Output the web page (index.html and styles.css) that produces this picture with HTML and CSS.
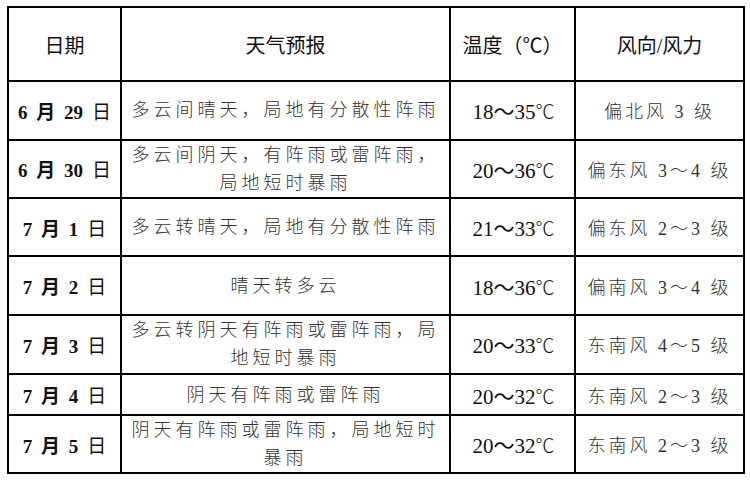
FILE: index.html
```html
<!DOCTYPE html>
<html lang="zh-CN">
<head>
<meta charset="utf-8">
<title>天气预报</title>
<link rel="stylesheet" href="styles.css">
</head>
<body>
<table class="forecast">
  <colgroup>
    <col class="c-date">
    <col class="c-desc">
    <col class="c-temp">
    <col class="c-wind">
  </colgroup>
  <thead>
    <tr class="r-head">
      <th>日期</th>
      <th>天气预报</th>
      <th>温度（℃）</th>
      <th>风向/风力</th>
    </tr>
  </thead>
  <tbody>
    <tr class="r-a">
      <td class="date">6 月 29 <span class="d">日</span></td>
      <td class="desc">多云间晴天，局地有分散性阵雨</td>
      <td class="temp">18～35<span class="deg">℃</span></td>
      <td class="wind">偏北风 3 级</td>
    </tr>
    <tr class="r-b">
      <td class="date">6 月 30 <span class="d">日</span></td>
      <td class="desc">多云间阴天，有阵雨或雷阵雨，局地短时暴雨</td>
      <td class="temp">20～36<span class="deg">℃</span></td>
      <td class="wind">偏东风 3～4 级</td>
    </tr>
    <tr class="r-a">
      <td class="date">7 月 1 <span class="d">日</span></td>
      <td class="desc">多云转晴天，局地有分散性阵雨</td>
      <td class="temp">21～33<span class="deg">℃</span></td>
      <td class="wind">偏东风 2～3 级</td>
    </tr>
    <tr class="r-a">
      <td class="date">7 月 2 <span class="d">日</span></td>
      <td class="desc">晴天转多云</td>
      <td class="temp">18～36<span class="deg">℃</span></td>
      <td class="wind">偏南风 3～4 级</td>
    </tr>
    <tr class="r-a">
      <td class="date">7 月 3 <span class="d">日</span></td>
      <td class="desc">多云转阴天有阵雨或雷阵雨，局地短时暴雨</td>
      <td class="temp">20～33<span class="deg">℃</span></td>
      <td class="wind">东南风 4～5 级</td>
    </tr>
    <tr class="r-c">
      <td class="date">7 月 4 <span class="d">日</span></td>
      <td class="desc">阴天有阵雨或雷阵雨</td>
      <td class="temp">20～32<span class="deg">℃</span></td>
      <td class="wind">东南风 2～3 级</td>
    </tr>
    <tr class="r-d">
      <td class="date">7 月 5 <span class="d">日</span></td>
      <td class="desc">阴天有阵雨或雷阵雨，局地短时暴雨</td>
      <td class="temp">20～32<span class="deg">℃</span></td>
      <td class="wind">东南风 2～3 级</td>
    </tr>
  </tbody>
</table>
</body>
</html>
```

FILE: styles.css
```css
html, body {
  margin: 0;
  padding: 0;
  background: #fff;
}

body {
  padding: 6px 0 0 7px;
  font-family: "Liberation Serif", "Noto Sans CJK SC", serif;
  color: #000;
}

.forecast {
  border-collapse: collapse;
  table-layout: fixed;
  width: 736px;
}

.c-date { width: 113px; }
.c-desc { width: 329px; }
.c-temp { width: 125px; }
.c-wind { width: 169px; }

.forecast th,
.forecast td {
  border: 2px solid #000;
  padding: 0 4px;
  text-align: center;
  vertical-align: middle;
}

.forecast th {
  font-weight: normal;
  font-size: 20px;
  color: #111;
}

.r-head { height: 74px; }
.r-a { height: 58.7px; }
.r-b { height: 57.7px; }
.r-c { height: 41.7px; }
.r-d { height: 55px; }

.date {
  font-size: 19px;
  font-weight: bold;
  word-spacing: 4px;
  color: #111;
  white-space: nowrap;
}

.date .d {
  font-weight: normal;
}

.desc {
  font-size: 18px;
  font-weight: 300;
  letter-spacing: 4px;
  line-height: 28px;
  color: #333;
}

.temp {
  font-size: 21px;
  color: #111;
}

.temp .deg {
  font-family: "Noto Sans CJK SC", sans-serif;
  font-weight: 300;
  font-size: 19px;
  letter-spacing: -2px;
}

.wind {
  font-size: 18px;
  font-weight: 300;
  letter-spacing: 3px;
  color: #333;
}
```
